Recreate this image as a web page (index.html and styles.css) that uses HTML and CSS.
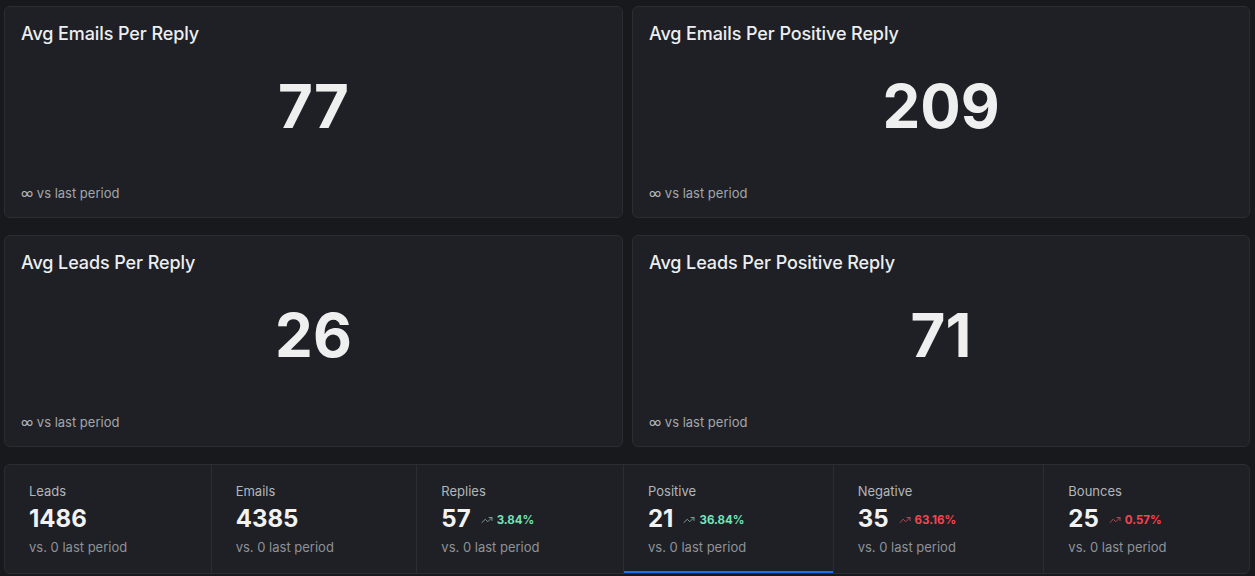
FILE: index.html
```html
<!DOCTYPE html>
<html lang="en">
<head>
<meta charset="utf-8">
<title>Metrics</title>
<link rel="stylesheet" href="styles.css">
</head>
<body>
<main class="page">
  <section class="cards">
    <div class="card">
      <h2 class="card-title">Avg Emails Per Reply</h2>
      <div class="card-value">77</div>
      <div class="card-foot"><span class="inf">∞</span> vs last period</div>
    </div>
    <div class="card">
      <h2 class="card-title">Avg Emails Per Positive Reply</h2>
      <div class="card-value">209</div>
      <div class="card-foot"><span class="inf">∞</span> vs last period</div>
    </div>
    <div class="card">
      <h2 class="card-title">Avg Leads Per Reply</h2>
      <div class="card-value">26</div>
      <div class="card-foot"><span class="inf">∞</span> vs last period</div>
    </div>
    <div class="card">
      <h2 class="card-title">Avg Leads Per Positive Reply</h2>
      <div class="card-value">71</div>
      <div class="card-foot"><span class="inf">∞</span> vs last period</div>
    </div>
  </section>

  <section class="stats">
    <div class="stat">
      <div class="stat-label">Leads</div>
      <div class="stat-row"><span class="stat-value">1486</span></div>
      <div class="stat-sub">vs. 0 last period</div>
    </div>
    <div class="stat">
      <div class="stat-label">Emails</div>
      <div class="stat-row"><span class="stat-value">4385</span></div>
      <div class="stat-sub">vs. 0 last period</div>
    </div>
    <div class="stat">
      <div class="stat-label">Replies</div>
      <div class="stat-row"><span class="stat-value">57</span>
        <span class="trend up"><svg viewBox="0 0 24 24" class="trend-icon"><polyline points="22 7 13.5 15.5 8.5 10.5 2 17"/><polyline points="16 7 22 7 22 13"/></svg>3.84%</span></div>
      <div class="stat-sub">vs. 0 last period</div>
    </div>
    <div class="stat active">
      <div class="stat-label">Positive</div>
      <div class="stat-row"><span class="stat-value">21</span>
        <span class="trend up"><svg viewBox="0 0 24 24" class="trend-icon"><polyline points="22 7 13.5 15.5 8.5 10.5 2 17"/><polyline points="16 7 22 7 22 13"/></svg>36.84%</span></div>
      <div class="stat-sub">vs. 0 last period</div>
    </div>
    <div class="stat">
      <div class="stat-label">Negative</div>
      <div class="stat-row"><span class="stat-value">35</span>
        <span class="trend down"><svg viewBox="0 0 24 24" class="trend-icon"><polyline points="22 7 13.5 15.5 8.5 10.5 2 17"/><polyline points="16 7 22 7 22 13"/></svg>63.16%</span></div>
      <div class="stat-sub">vs. 0 last period</div>
    </div>
    <div class="stat">
      <div class="stat-label">Bounces</div>
      <div class="stat-row"><span class="stat-value">25</span>
        <span class="trend down"><svg viewBox="0 0 24 24" class="trend-icon"><polyline points="22 7 13.5 15.5 8.5 10.5 2 17"/><polyline points="16 7 22 7 22 13"/></svg>0.57%</span></div>
      <div class="stat-sub">vs. 0 last period</div>
    </div>
  </section>
</main>
</body>
</html>
```

FILE: styles.css
```css
* { box-sizing: border-box; }
html, body { margin: 0; padding: 0; background: #17191c; }
body {
  font-family: Inter, "Noto Sans", "Liberation Sans", sans-serif;
  color: #e8e9eb;
  overflow: hidden;
}
.page {
  padding: 6px 5px 0 4px;
}
.cards {
  display: grid;
  grid-template-columns: 619fr 618fr;
  column-gap: 9px;
  row-gap: 17px;
}
.card {
  height: 212px;
  background: #1e2025;
  border: 1px solid #2a2d32;
  border-radius: 6px;
  padding: 16px 16px 14px;
  display: flex;
  flex-direction: column;
}
.card-title {
  margin: 0;
  font-size: 18px;
  font-weight: 500;
  line-height: 22px;
  color: #eceef0;
  letter-spacing: -0.1px;
}
.card-value {
  margin-top: 31px;
  text-align: center;
  font-size: 60px;
  line-height: 60px;
  font-weight: 700;
  color: #efefef;
}
.card-foot {
  margin-top: auto;
  font-size: 13px;
  line-height: 20px;
  color: #a3a6ab;
}
.inf { color: #b0b3b8; }

.stats {
  margin-top: 17px;
  display: grid;
  grid-template-columns: 206fr 206fr 207fr 210fr 211fr 206fr;
  background: #1e2025;
  border: 1px solid #2a2d32;
  border-radius: 6px;
  overflow: hidden;
}
.stat {
  padding: 16px 24px 16px 24px;
  border-left: 1px solid #2a2d32;
}
.stat:first-child { border-left: none; }
.stat.active { box-shadow: inset 0 -2px 0 #1c6ef0; }
.stat-label {
  font-size: 13px;
  line-height: 20px;
  color: #b3b6bb;
}
.stat-row {
  display: flex;
  align-items: center;
  gap: 10px;
  height: 32px;
  margin-top: 2px;
}
.stat-value {
  font-size: 24px;
  line-height: 32px;
  font-weight: 700;
  color: #f2f2f2;
}
.trend {
  display: inline-flex;
  align-items: center;
  gap: 4px;
  font-size: 11.5px;
  font-weight: 700;
  line-height: 16px;
  margin-top: 2px;
}
.trend-icon {
  width: 12px;
  height: 12px;
  fill: none;
  stroke-width: 2;
  stroke-linecap: round;
  stroke-linejoin: round;
}
.trend.up { color: #74e2b9; }
.trend.up .trend-icon { stroke: #7c9a8e; }
.trend.down { color: #f4444f; }
.trend.down .trend-icon { stroke: #b04a52; }
.stat-sub {
  margin-top: 2px;
  font-size: 13px;
  line-height: 20px;
  color: #8f9297;
}
```
